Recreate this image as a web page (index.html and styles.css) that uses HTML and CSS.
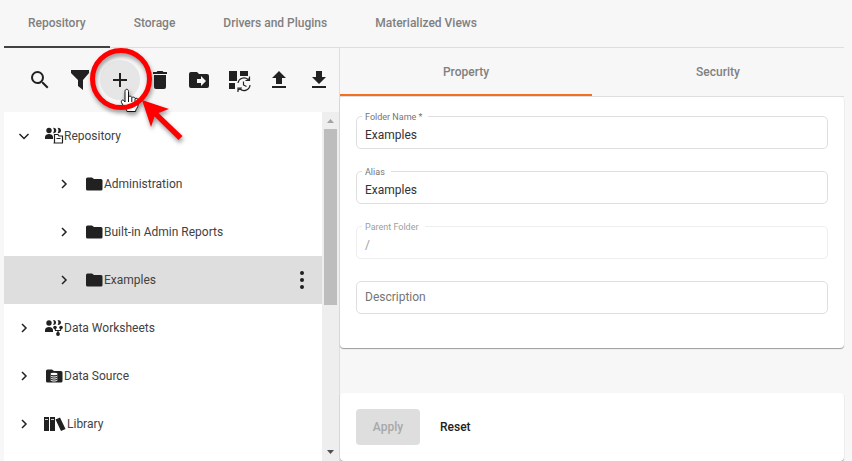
FILE: index.html
```html
<!DOCTYPE html>
<html lang="en">
<head>
<meta charset="utf-8">
<title>Repository</title>
<link rel="stylesheet" href="styles.css">
</head>
<body>
<div class="app">
  <nav class="main-nav">
    <a class="nav-link active" href="#repository">Repository</a>
    <a class="nav-link" href="#storage">Storage</a>
    <a class="nav-link" href="#drivers">Drivers and Plugins</a>
    <a class="nav-link" href="#views">Materialized Views</a>
  </nav>
  <main class="workspace">
    <section class="browser">
      <div class="toolbar">
        <button class="tool" aria-label="Search"><svg viewBox="0 0 24 24"><path d="M15.5 14h-.79l-.28-.27A6.47 6.47 0 0 0 16 9.500A6.500 6.500 0 1 0 9.500 16c1.610 0 3.090-.590 4.230-1.570l.270.280v.790l5 4.990L20.490 19zm-6 0a4.500 4.500 0 1 1 0-9 4.500 4.500 0 0 1 0 9z"/></svg></button>
        <button class="tool" aria-label="Filter"><svg viewBox="0 0 24 24"><path d="M3 2h18v3l-6 7v10l-5-4v-6L3 5z"/></svg></button>
        <button class="tool hovered" aria-label="Add"><svg viewBox="0 0 24 24"><path d="M19 13h-6v6h-2v-6H5v-2h6V5h2v6h6z"/></svg>
          <svg class="callout" viewBox="0 0 104 104" aria-hidden="true">
            <g fill="#fff" stroke="#111" stroke-linejoin="round">
              <path d="M41 58V47.500c0-3 3.500-3 3.500 0V53c1-1.300 3-1 3.300.7 1-1 2.900-.7 3.200.8 1.300-.7 3.200 0 3.200 1.800V60c0 4-2.700 5-2.700 7.500h-8.500c0-2.500-3.500-4.500-5.500-9-.8-1.800 1-3.200 2.200-2.200z"/>
              <path d="M44.500 53v5M47.800 54v4M51 55v4" fill="none"/>
            </g>
            <circle cx="37" cy="35" r="28.500" fill="none" stroke="red" stroke-width="5"/>
            <path d="M58 56l27 9-10.500 4L98.500 92l-4 4L70.500 72.500 67 83z" fill="red"/>
          </svg>
        </button>
        <button class="tool" aria-label="Delete"><svg viewBox="0 0 24 24"><path d="M6 19a2 2 0 0 0 2 2h8a2 2 0 0 0 2-2V7H6zM19 4h-3.500l-1-1h-5l-1 1H5v2h14z"/></svg></button>
        <button class="tool" aria-label="Move"><svg viewBox="0 0 24 24"><path d="M20 6h-8l-2-2H4a2 2 0 0 0-2 2v12a2 2 0 0 0 2 2h16a2 2 0 0 0 2-2V8a2 2 0 0 0-2-2zm-6 12v-3h-4v-4h4V8l5 5z"/></svg></button>
        <button class="tool" aria-label="Scheduled views"><svg viewBox="0 0 24 24"><path d="M2 3h8v10H2zM13 3h8v5h-8zM2 15h6v6H2z"/><path d="M11 15a6 6 0 0 1 10-3.500l1.500-1M22.500 8.500v4h-4M23 17a6 6 0 0 1-10 4l-2 1M11 24v-4h4M16.500 13.500V17l3 1.500" fill="none" stroke="currentColor" stroke-width="1.200"/></svg></button>
        <button class="tool" aria-label="Import"><svg viewBox="0 0 24 24"><path d="M9 16h6v-6h4l-7-7-7 7h4zM5 18h14v2H5z"/></svg></button>
        <button class="tool" aria-label="Export"><svg viewBox="0 0 24 24"><path d="M19 9h-4V3H9v6H5l7 7zM5 18h14v2H5z"/></svg></button>
      </div>
      <div class="tree-area">
        <ul class="tree">
          <li class="row">
            <button class="toggle" aria-label="Collapse Repository"><svg viewBox="0 0 12 12"><path d="M1.500 4L6 8.500 10.500 4"/></svg></button>
            <svg class="kind" viewBox="0 0 20 20"><circle cx="5" cy="4.500" r="2.700"/><path d="M1 13v-2c0-4 8-4 8 0v2zM9 1.800c2.500 0 3.300 1.200 3.300 2.700S11.500 7.200 9 7.200c1.300-1.600 1.300-3.800 0-5.400zM13.500 1.800c2.500 0 3.500 1.200 3.500 2.700s-1 2.700-3.500 2.700c1.300-1.600 1.300-3.800 0-5.400z"/><path d="M10.500 16.500v-8H14l1 1.500h3.500v6.500M12.500 12.500h4M9.500 17h9.500" fill="none" stroke="currentColor" stroke-width="1.200"/></svg>
            <span>Repository</span>
          </li>
          <li class="row child">
            <button class="toggle" aria-label="Expand Administration"><svg viewBox="0 0 12 12"><path d="M4 2l4 4-4 4"/></svg></button>
            <svg class="kind" viewBox="0 0 20 20"><path d="M2 5q0-1.500 1.500-1.500H8L10 5h7q1.500 0 1.500 1.500v8.500Q18.500 16.500 17 16.500H3.500Q2 16.500 2 15z"/></svg>
            <span>Administration</span>
          </li>
          <li class="row child">
            <button class="toggle" aria-label="Expand Built-in Admin Reports"><svg viewBox="0 0 12 12"><path d="M4 2l4 4-4 4"/></svg></button>
            <svg class="kind" viewBox="0 0 20 20"><path d="M2 5q0-1.500 1.500-1.500H8L10 5h7q1.500 0 1.500 1.500v8.500Q18.500 16.500 17 16.500H3.500Q2 16.500 2 15z"/></svg>
            <span>Built-in Admin Reports</span>
          </li>
          <li class="row child selected">
            <button class="toggle" aria-label="Expand Examples"><svg viewBox="0 0 12 12"><path d="M4 2l4 4-4 4"/></svg></button>
            <svg class="kind" viewBox="0 0 20 20"><path d="M2 5q0-1.500 1.500-1.500H8L10 5h7q1.500 0 1.500 1.500v8.500Q18.500 16.500 17 16.500H3.500Q2 16.500 2 15z"/></svg>
            <span>Examples</span>
            <button class="more" aria-label="More actions"><svg viewBox="0 0 24 24"><circle cx="12" cy="5" r="2"/><circle cx="12" cy="12" r="2"/><circle cx="12" cy="19" r="2"/></svg></button>
          </li>
          <li class="row">
            <button class="toggle" aria-label="Expand Data Worksheets"><svg viewBox="0 0 12 12"><path d="M4 2l4 4-4 4"/></svg></button>
            <svg class="kind" viewBox="0 0 20 20"><circle cx="5" cy="5" r="2.700"/><path d="M1 14v-2c0-4 8-4 8 0v2zM9 2c2.500 0 3 1 3 2.500S11.500 7 9 7c1.200-1.500 1.200-3.500 0-5zM13.500 2c2.500 0 3.500 1 3.500 2.500S16 7 13.500 7c1.200-1.500 1.200-3.500 0-5z"/><circle cx="11" cy="9.500" r="1.800"/><circle cx="17" cy="9.500" r="1.800"/><circle cx="14" cy="16" r="1.900"/><path d="M11 10l.5 2.500h5L17 10M14 12.500V16" fill="none" stroke="currentColor" stroke-width="1.200"/></svg>
            <span>Data Worksheets</span>
          </li>
          <li class="row">
            <button class="toggle" aria-label="Expand Data Source"><svg viewBox="0 0 12 12"><path d="M4 2l4 4-4 4"/></svg></button>
            <svg class="kind" viewBox="0 0 20 20"><path d="M2 5q0-1.500 1.500-1.500H8L10 5h7q1.500 0 1.500 1.500v8.500Q18.500 16.500 17 16.500H3.500Q2 16.500 2 15z"/><ellipse cx="10" cy="8" rx="3.500" ry="1.200" fill="#fff"/><path d="M6.500 10c1 1.400 6 1.400 7 0M6.500 12c1 1.400 6 1.400 7 0M6.500 14c1 1.400 6 1.400 7 0" fill="none" stroke="#fff"/></svg>
            <span>Data Source</span>
          </li>
          <li class="row">
            <button class="toggle" aria-label="Expand Library"><svg viewBox="0 0 12 12"><path d="M4 2l4 4-4 4"/></svg></button>
            <svg class="kind wide" viewBox="0 0 23 20"><path d="M0 3h5v14H0zM6 3h5v14H6zM11.500 5.500l4.500-2 5.500 11.500-4.500 2z"/><path d="M1 5.500h3M7 5.500h3" stroke="#fff" stroke-width=".8"/></svg>
            <span>Library</span>
          </li>
        </ul>
        <div class="scrollbar" aria-hidden="true">
          <svg class="arrow dim" viewBox="0 0 17 17"><path d="M5 11l3.500-4 3.500 4z"/></svg>
          <div class="track"><div class="thumb"></div></div>
          <svg class="arrow" viewBox="0 0 17 17"><path d="M5 6l3.500 4L12 6z"/></svg>
        </div>
      </div>
    </section>
    <section class="details">
      <div class="tabs" role="tablist">
        <button class="tab active" role="tab" aria-selected="true">Property</button>
        <button class="tab" role="tab" aria-selected="false">Security</button>
      </div>
      <form class="card fields">
        <div class="field"><label for="name">Folder Name *</label><input id="name" type="text" value="Examples"></div>
        <div class="field"><label for="alias">Alias</label><input id="alias" type="text" value="Examples"></div>
        <div class="field disabled"><label for="parent">Parent Folder</label><input id="parent" type="text" value="/" disabled></div>
        <div class="field"><input id="description" type="text" placeholder="Description" aria-label="Description"></div>
      </form>
      <footer class="card actions">
        <button class="btn apply" disabled>Apply</button>
        <button class="btn">Reset</button>
      </footer>
    </section>
  </main>
</div>
</body>
</html>
```
FILE: styles.css
```css
* { box-sizing: border-box; }

body {
  margin: 0;
  background: #f7f7f7;
  color: #424242;
  font: 12px/16px Roboto, sans-serif;
}

button, input { font: inherit; color: inherit; }
button { border: 0; padding: 0; background: none; }

.app {
  display: flex;
  flex-direction: column;
  min-height: 100vh;
  padding: 0 8px 0 4px;
}

.main-nav {
  display: flex;
  height: 48px;
  border-bottom: 1px solid #dedede;
}

.nav-link {
  padding: 15px 24px 0;
  margin-bottom: -1px;
  color: #808080;
  font-weight: 500;
  text-decoration: none;
}

.nav-link.active { border-bottom: 2px solid #424242; }

.workspace {
  flex: 1;
  display: grid;
  grid-template-columns: 40% 60%;
}

.browser {
  display: flex;
  flex-direction: column;
  border-right: 1px solid #dedede;
}

.toolbar {
  display: flex;
  height: 64px;
  padding: 12px 0 12px 16px;
}

.tool {
  position: relative;
  display: grid;
  place-items: center;
  width: 40px;
  height: 40px;
  border-radius: 50%;
  color: #212121;
}

.tool svg { width: 24px; height: 24px; fill: currentColor; }
.tool.hovered { background: #e6e6e6; }

.tool .callout {
  position: absolute;
  z-index: 1;
  top: -16px;
  left: -16px;
  width: 104px;
  height: 104px;
  pointer-events: none;
  filter: drop-shadow(1px 3px 2px rgba(0, 0, 0, .4));
}

.tree-area { flex: 1; display: flex; background: #fff; }

.tree {
  flex: 1;
  margin: 0;
  padding: 0;
  list-style: none;
}

.row { display: flex; align-items: center; height: 48px; }
.row.child { padding-left: 40px; }
.row.selected { background: #dedede; }

.toggle {
  display: grid;
  place-items: center;
  width: 40px;
  height: 40px;
}

.toggle svg {
  width: 12px;
  height: 12px;
  fill: none;
  stroke: #212121;
  stroke-width: 1.5;
}

.kind { width: 20px; height: 20px; fill: currentColor; color: #212121; }
.kind.wide { width: 23px; }

.more { width: 40px; height: 40px; margin-left: auto; }
.more svg { display: block; width: 24px; height: 24px; margin: auto; fill: #212121; }

.scrollbar {
  display: flex;
  flex-direction: column;
  width: 17px;
  background: #eee;
}

.arrow { width: 17px; height: 17px; fill: #505050; }
.arrow.dim { fill: #a3a3a3; }
.track { flex: 1; padding: 0 2px; }
.thumb { height: 176px; background: #bdbdbd; }

.details { display: flex; flex-direction: column; }

.tabs {
  display: flex;
  height: 49px;
  border-bottom: 1px solid #dedede;
}

.tab {
  flex: 1;
  padding-top: 2px;
  border-bottom: 2px solid transparent;
  color: #808080;
  font-weight: 500;
}

.tab.active { border-color: #f36f21; }

.card {
  background: #fff;
  border-radius: 4px;
  box-shadow: 0 1px 1px #999;
}

.fields {
  display: grid;
  gap: 22px;
  padding: 19px 16px 34px;
}

.field { position: relative; }

.field label {
  position: absolute;
  top: -5px;
  left: 6px;
  padding: 0 6px 0 3px;
  background: #fff;
  color: #757575;
  font-size: 9px;
  line-height: 12px;
}

.field input {
  display: block;
  width: 100%;
  height: 33px;
  padding: 4px 8px 0;
  border: 1px solid #dedede;
  border-radius: 5px;
  background: #fff;
  color: #333;
}

.field input::placeholder { color: #757575; opacity: 1; }
.field input:placeholder-shown { padding: 0 8px 2px; }
.field.disabled label { color: #9e9e9e; }
.field.disabled input { border-color: #eee; color: #9e9e9e; }

.actions {
  display: flex;
  gap: 4px;
  margin-top: auto;
  padding: 16px;
}

.btn {
  height: 36px;
  padding: 0 16px;
  border-radius: 4px;
  color: #212121;
  font-weight: 500;
}

.btn.apply { min-width: 64px; background: #dedede; color: #a8a8a8; }
```
